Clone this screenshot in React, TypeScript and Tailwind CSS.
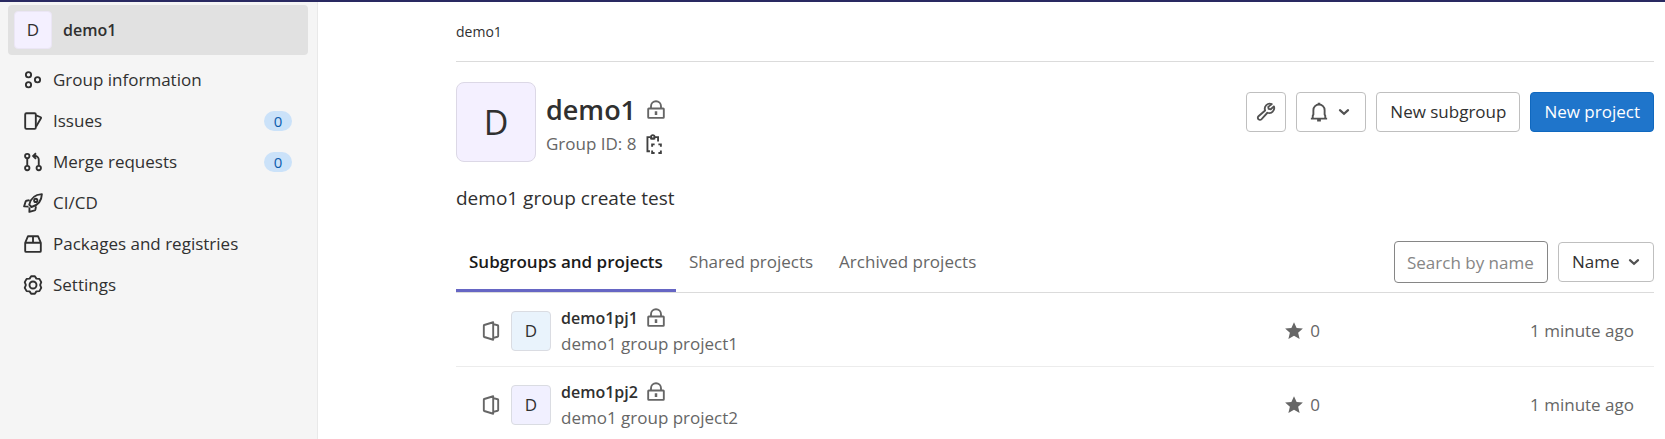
import { ReactNode } from "react";

interface IconProps {
  className?: string
  children: ReactNode
}

const Icon = ({ className = '', children }: IconProps) => (
  <svg
    viewBox="0 0 16 16"
    className={`w-5 h-5 shrink-0 ${className}`}
    fill="none"
    stroke="currentColor"
    strokeWidth="1.5"
    aria-hidden="true"
  >
    {children}
  </svg>
)

const GroupIcon = () => (
  <Icon>
    <circle cx="4.4" cy="3.8" r="2.1" />
    <circle cx="4.4" cy="11.8" r="2.1" />
    <circle cx="11.6" cy="7.8" r="2.1" />
  </Icon>
)

const IssuesIcon = () => (
  <Icon>
    <rect x="1.75" y="1.75" width="8.5" height="12.5" rx="1" />
    <path d="M10.5 3.5l3.7 1.5a.5.5 0 0 1 .25.6L10.5 12.5" strokeLinejoin="round" />
  </Icon>
)

const MergeIcon = () => (
  <Icon>
    <circle cx="3.4" cy="3.2" r="1.75" />
    <circle cx="3.4" cy="12.8" r="1.75" />
    <circle cx="12.6" cy="12.8" r="1.75" />
    <path d="M3.4 5v6M12.6 11V6.2a3 3 0 0 0-3-3H8.2" />
    <path d="M10.4 1L8.1 3.2l2.3 2.3" />
  </Icon>
)

const RocketIcon = () => (
  <Icon>
    <path
      d="M5 9.3C6 4.7 9.5 1.3 15.1.9 14.9 6.3 11.5 10 6.8 11.2zM5.2 5.7l-2.4.5a1 1 0 0 0-.7.6L.9 10.7l3.5.2M10.4 10.7l-.5 2.5a1 1 0 0 1-.6.7l-4.2 1.2.1-3.6"
      strokeLinejoin="round"
    />
    <circle cx="10.2" cy="5.9" r="1.3" />
  </Icon>
)

const PackageIcon = () => (
  <Icon>
    <path d="M1.75 7v6.5a.75.75 0 0 0 .75.75h11a.75.75 0 0 0 .75-.75V7L12 1.75H4zM1.75 7h12.5M8 1.75V7" strokeLinejoin="round" />
  </Icon>
)

const SettingsIcon = () => (
  <Icon>
    <path
      d="M6.5 1h3l1.2 1.9 2.4.2 1.5 2.6L13.7 8l.9 2.3-1.5 2.6-2.4.2L9.5 15h-3l-1.2-1.9-2.4-.2-1.5-2.6L2.3 8l-.9-2.3 1.5-2.6 2.4-.2z"
      strokeLinejoin="round"
    />
    <circle cx="8" cy="8" r="2.8" />
  </Icon>
)

const LockIcon = () => (
  <Icon className="text-[#666]">
    <rect x="1.75" y="6.75" width="12.5" height="7.5" rx=".5" />
    <path d="M4 6.5V5a4 4 0 0 1 8 0v1.5" />
    <path d="M8 9v3" strokeWidth="2" />
  </Icon>
)

const ClipboardIcon = () => (
  <Icon>
    <path d="M4.75 13.75h-2V2.5h2.5M8.75 2.5h2.5V6M5 3.7h4" />
    <circle cx="7" cy="2.3" r="1.4" />
    <path d="M6.5 10.2V8.25h2M11.5 8.25h2v1.95M13.5 13.2v1.95h-2M8.5 15.15h-2V13.2" />
  </Icon>
)

const WrenchIcon = () => (
  <Icon>
    <path
      d="M12.6 1.7a4 4 0 0 0-5.3 5.1L2 11.4a1.6 1.6 0 0 0 0 2.4 1.6 1.6 0 0 0 2.4 0l4.7-5.2a4 4 0 0 0 5.2-5.1l-2.5 2.3-1.7-.3-.3-1.6z"
      strokeLinejoin="round"
    />
  </Icon>
)

const BellIcon = () => (
  <Icon>
    <path d="M1.5 13.25h13M3 13v-2l.5-1V6.5a4.5 4.5 0 0 1 9 0V10l.5 1v2" />
    <path d="M8 .5V2M6.5 14.5h3" strokeWidth="2" />
  </Icon>
)

const ChevronIcon = ({ className = '' }: { className?: string }) => (
  <Icon className={className}>
    <path d="M4.75 6.5L8 9.5l3.25-3" strokeWidth="1.7" strokeLinecap="round" />
  </Icon>
)

const ProjectIcon = () => (
  <Icon>
    <path d="M9.75 1L2.6 3.2a.5.5 0 0 0-.35.5v8.6a.5.5 0 0 0 .35.5L9.75 15zM10 2.5l3.3.9a.6.6 0 0 1 .45.6v8a.6.6 0 0 1-.45.6l-3.3.9" strokeLinejoin="round" />
  </Icon>
)

const StarIcon = () => (
  <Icon>
    <path d="M8 .9l2.1 4.6 5 .5-3.8 3.3 1.2 5L8 11.7l-4.5 2.6 1.2-5L.9 6l5-.5z" fill="currentColor" stroke="none" />
  </Icon>
)

const navItems = [
  { label: 'Group information', icon: <GroupIcon /> },
  { label: 'Issues', icon: <IssuesIcon />, count: 0 },
  { label: 'Merge requests', icon: <MergeIcon />, count: 0 },
  { label: 'CI/CD', icon: <RocketIcon /> },
  { label: 'Packages and registries', icon: <PackageIcon /> },
  { label: 'Settings', icon: <SettingsIcon /> },
]

const projects = [
  { name: 'demo1pj1', description: 'demo1 group project1', stars: 0, updated: '1 minute ago', color: 'bg-[#e9f3fc]' },
  { name: 'demo1pj2', description: 'demo1 group project2', stars: 0, updated: '1 minute ago', color: 'bg-[#f1f0ff]' },
]

const Sidebar = () => (
  <aside className="w-[318px] shrink-0 bg-[#f5f5f5] border-r border-[#e9e9e9] pt-[3px] px-2">
    <a href="#" className="flex items-center h-[50px] w-[300px] rounded bg-[#e1e1e1] pl-1.5">
      <span className="flex items-center justify-center w-[38px] h-[38px] rounded bg-[#f4f0ff] border border-[#ebe6f5]">D</span>
      <span className="ml-[11px] text-base font-semibold">demo1</span>
    </a>
    <ul className="mt-1">
      {navItems.map(({ label, icon, count }) => (
        <li key={label}>
          <a href="#" className="flex items-center h-[41px] pl-[15px] pr-[17px]">
            {icon}
            <span className="ml-[10px]">{label}</span>
            {count !== undefined && (
              <span className="ml-auto w-7 h-5 rounded-full bg-[#cbe2f9] text-[#0b5cad] text-[15px] leading-5 text-center">
                {count}
              </span>
            )}
          </a>
        </li>
      ))}
    </ul>
  </aside>
)

const GroupHeader = () => (
  <header className="flex items-start pt-5">
    <div className="flex items-center justify-center w-20 h-20 rounded-lg bg-[#f4f0ff] border border-[#dcd8e6] text-[34px]">
      D
    </div>
    <div className="ml-[10px] pt-2">
      <h1 className="flex items-center gap-2.5 text-[27px] leading-10 font-semibold">
        demo1 <LockIcon />
      </h1>
      <div className="flex items-center gap-2 text-[#666] leading-7">
        Group ID: 8
        <button aria-label="Copy group ID" className="text-[#404040]"><ClipboardIcon /></button>
      </div>
    </div>
    <div className="ml-auto mt-2.5 flex gap-2.5">
      <button aria-label="Admin area" className="flex items-center justify-center w-10 h-10 rounded border border-[#bfbfbf] text-[#525252]">
        <WrenchIcon />
      </button>
      <button aria-label="Notifications" aria-haspopup="true" className="flex items-center justify-center gap-[5px] w-[70px] h-10 rounded border border-[#bfbfbf] text-[#525252]">
        <BellIcon />
        <ChevronIcon />
      </button>
      <button className="h-10 px-[13px] rounded border border-[#bfbfbf]">New subgroup</button>
      <button className="h-10 px-[13px] rounded bg-[#1f75cb] border border-[#1068bf] text-white">New project</button>
    </div>
  </header>
)

const Tabs = () => (
  <div className="flex items-end border-b border-[#dbdbdb]">
    <nav className="flex text-[#666]">
      <a href="#" className="h-[61px] pt-[18px] px-[13px] border-b-3 border-[#6666c4] text-[#1a1a1a] font-semibold">Subgroups and projects</a>
      <a href="#" className="h-[61px] pt-[18px] px-[13px]">Shared projects</a>
      <a href="#" className="h-[61px] pt-[18px] px-[13px]">Archived projects</a>
    </nav>
    <div className="ml-auto mb-[9px] flex items-center gap-2.5">
      <input
        type="text"
        aria-label="Search by name"
        placeholder="Search by name"
        className="w-[154px] h-[42px] px-3 rounded border border-[#868686] placeholder:text-[#868686]"
      />
      <div className="relative">
        <select aria-label="Sort by" className="appearance-none w-24 h-10 pl-[13px] rounded border border-[#bfbfbf] bg-white">
          <option>Name</option>
          <option>Last created</option>
          <option>Last updated</option>
        </select>
        <ChevronIcon className="absolute right-2.5 top-2.5 pointer-events-none text-[#525252]" />
      </div>
    </div>
  </div>
)

const ProjectList = () => (
  <ul>
    {projects.map((project) => (
      <li key={project.name} className="flex items-center h-[74px] pt-0.5 pl-[25px] pr-5 border-b border-[#ececec] text-[#666]">
        <ProjectIcon />
        <span className={`flex items-center justify-center ml-[10px] w-10 h-10 rounded border border-[#dadce2] text-[#303030] ${project.color}`}>
          D
        </span>
        <div className="ml-[10px] leading-[26px]">
          <div className="flex items-center gap-2">
            <a href="#" className="text-[#303030] text-base leading-[26px] font-semibold">{project.name}</a>
            <LockIcon />
          </div>
          <p>{project.description}</p>
        </div>
        <span className="ml-auto flex items-center gap-1.5"><StarIcon /> {project.stars}</span>
        <time className="w-[314px] text-right">{project.updated}</time>
      </li>
    ))}
  </ul>
)

const App = () => {
  return (
    <div className="h-screen overflow-hidden flex flex-col border-t-2 border-[#292961] bg-white text-[#303030] text-[17px] font-['Open_Sans',sans-serif]">
      <div className="flex flex-1 min-h-0">
        <Sidebar />
        <main className="flex-1 min-w-0 pl-[138px] pr-[11px]">
          <nav aria-label="Breadcrumb" className="flex items-center h-[60px] border-b border-[#dbdbdb] text-sm">
            <a href="#">demo1</a>
          </nav>
          <GroupHeader />
          <p className="mt-[21px] text-[19px] leading-[30px]">demo1 group create test</p>
          <div className="mt-[18px]">
            <Tabs />
            <ProjectList />
          </div>
        </main>
      </div>
    </div>
  )
}

export default App
